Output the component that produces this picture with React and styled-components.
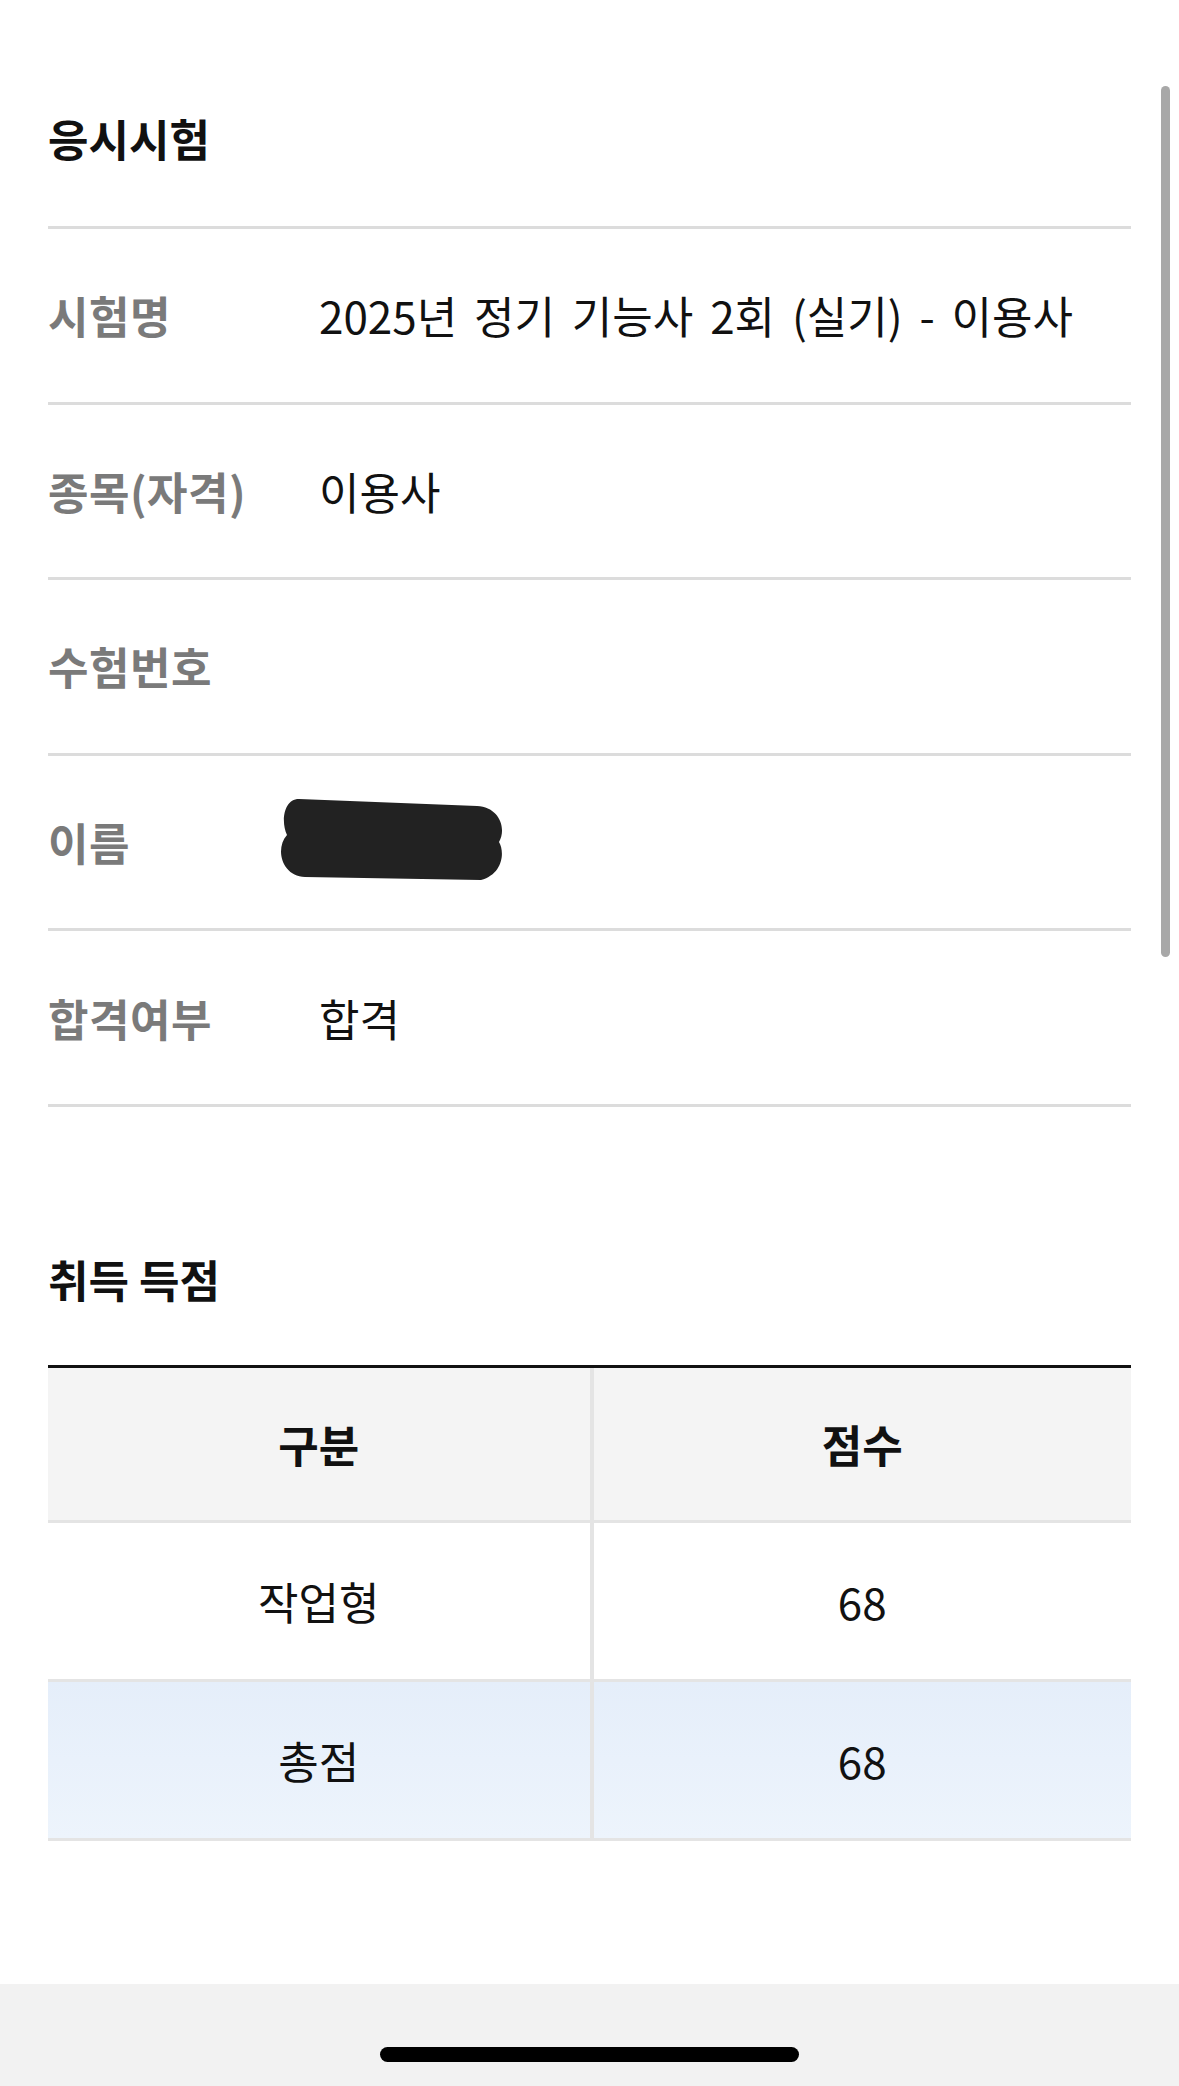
import styled, { createGlobalStyle } from 'styled-components'

const GlobalStyle = createGlobalStyle`
  html, body {
    margin: 0;
    padding: 0;
    background: #ffffff;
  }
  body {
    font-family: "Noto Sans CJK KR", "Noto Sans", sans-serif;
    color: #111111;
  }
  * {
    box-sizing: border-box;
  }
`

const Screen = styled.div`
  min-height: 100vh;
  display: flex;
  flex-direction: column;
`

const Main = styled.main`
  flex: 1;
  padding: 0 48px;
`

const TitleBar = styled.div`
  padding-top: ${(p) => p.$top}px;
  padding-bottom: ${(p) => p.$bottom}px;
  border-bottom: ${(p) => (p.$ruled ? '3px solid #dcdcdc' : 'none')};
`

const SectionTitle = styled.h2`
  margin: 0;
  font-size: 44px;
  line-height: 50px;
  font-weight: 700;
  letter-spacing: 0;
  color: #111111;
`

const InfoRow = styled.div`
  display: flex;
  align-items: center;
  height: 175.6px;
  border-bottom: 3px solid #dcdcdc;
`

const Label = styled.div`
  width: 271px;
  flex-shrink: 0;
  font-size: 44px;
  font-weight: 700;
  letter-spacing: 0.5px;
  color: #7a7a7a;
`

const Value = styled.div`
  font-size: 44px;
  font-weight: 400;
  letter-spacing: 0;
  word-spacing: 7px;
  color: #111111;
  white-space: nowrap;
`

const Redaction = styled.svg`
  display: block;
  margin-left: -42px;
  margin-top: -6px;
`

const ScoreTable = styled.div`
  border-top: 3px solid #111111;
`

const ScoreRow = styled.div`
  display: grid;
  grid-template-columns: 1fr 1fr;
  height: ${(p) => (p.$tone === 'head' ? 155 : 159)}px;
  border-bottom: 3px solid #e4e4e4;
  background: ${(p) =>
    p.$tone === 'head'
      ? '#f4f4f4'
      : p.$tone === 'total'
      ? 'linear-gradient(to bottom, #e5eefa, #edf4fc)'
      : '#ffffff'};
`

const Cell = styled.div`
  display: flex;
  align-items: center;
  justify-content: center;
  font-size: 44px;
  letter-spacing: 0;
  font-weight: ${(p) => (p.$head ? 700 : 400)};
  color: #111111;
  & + & {
    border-left: 4px solid #e4e4e4;
  }
`

const BottomBar = styled.div`
  height: 102px;
  background: #f2f2f2;
  display: flex;
  justify-content: center;
  padding-top: 63px;
`

const HomeIndicator = styled.div`
  width: 419px;
  height: 15px;
  border-radius: 8px;
  background: #000000;
`

const ScrollThumb = styled.div`
  position: fixed;
  top: 86px;
  right: 9px;
  width: 9px;
  height: 871px;
  border-radius: 5px;
  background: #a8a8a8;
`

const examInfo = [
  { label: '시험명', value: '2025년 정기 기능사 2회 (실기) - 이용사' },
  { label: '종목(자격)', value: '이용사' },
  { label: '수험번호', value: '' },
  { label: '이름', value: null },
  { label: '합격여부', value: '합격' },
]

const scores = [
  { name: '작업형', score: 68 },
  { name: '총점', score: 68, total: true },
]

function App() {
  return (
    <Screen>
      <GlobalStyle />
      <Main>
        <section>
          <TitleBar $top={113} $bottom={63} $ruled>
            <SectionTitle>응시시험</SectionTitle>
          </TitleBar>
          {examInfo.map((row) => (
            <InfoRow key={row.label}>
              <Label>{row.label}</Label>
              {row.value === null ? (
                <Redaction width="226" height="83" viewBox="0 0 226 83">
                  <path
                    d="M22 1 L200 8 C222 9 230 30 222 44 C228 54 226 76 204 82 L28 79 C4 78 -2 50 10 37 C4 25 6 1 22 1 Z"
                    fill="#222222"
                  />
                </Redaction>
              ) : (
                <Value>{row.value}</Value>
              )}
            </InfoRow>
          ))}
        </section>

        <section>
          <TitleBar $top={147} $bottom={61}>
            <SectionTitle>취득 득점</SectionTitle>
          </TitleBar>
          <ScoreTable>
            <ScoreRow $tone="head">
              <Cell $head>구분</Cell>
              <Cell $head>점수</Cell>
            </ScoreRow>
            {scores.map((s) => (
              <ScoreRow key={s.name} $tone={s.total ? 'total' : 'body'}>
                <Cell>{s.name}</Cell>
                <Cell>{s.score}</Cell>
              </ScoreRow>
            ))}
          </ScoreTable>
        </section>
      </Main>
      <BottomBar>
        <HomeIndicator />
      </BottomBar>
      <ScrollThumb />
    </Screen>
  )
}

export default App
